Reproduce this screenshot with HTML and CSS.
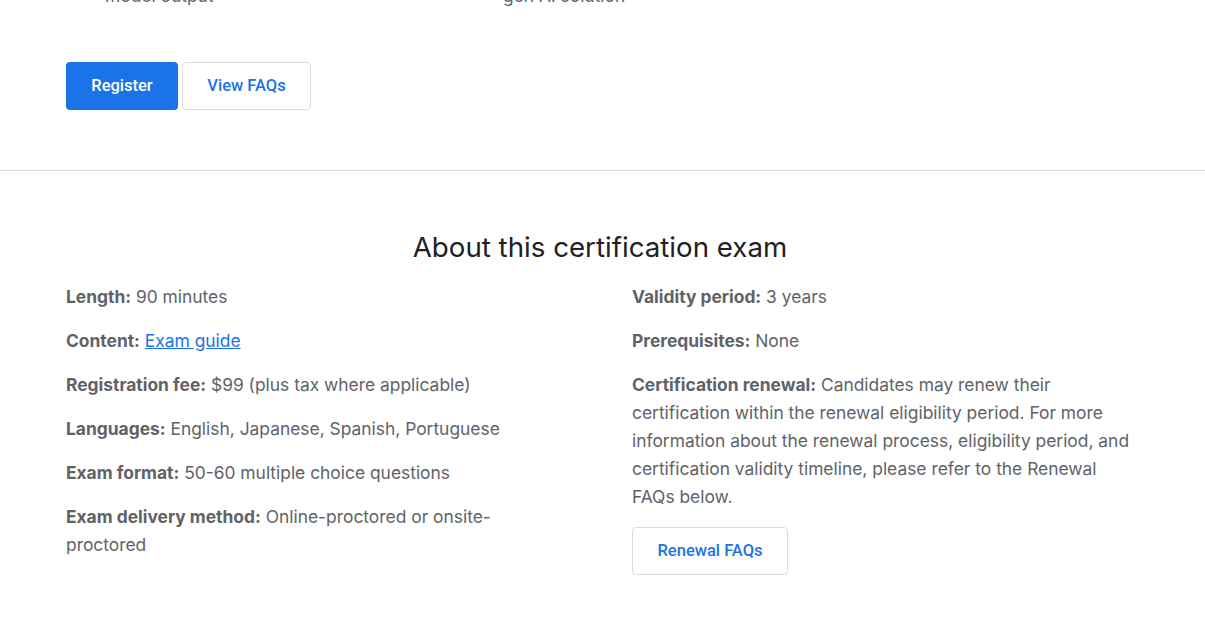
FILE: index.html
```html
<!DOCTYPE html>
<html lang="en">
<head>
<meta charset="utf-8">
<title>About this certification exam</title>
<link rel="stylesheet" href="styles.css">
</head>
<body>
  <section class="intro">
    <div class="wrap">
      <ul class="skills">
        <li>model output</li>
        <li>gen AI solution</li>
      </ul>
      <div class="actions">
        <a class="btn btn-primary" href="#">Register</a>
        <a class="btn btn-outline" href="#">View FAQs</a>
      </div>
    </div>
  </section>

  <section class="about">
    <div class="wrap">
      <h2 class="about-title">About this certification exam</h2>
      <div class="about-grid">
        <div class="col">
          <p><b>Length:</b> 90 minutes</p>
          <p><b>Content:</b> <a class="link" href="#">Exam guide</a></p>
          <p><b>Registration fee:</b> $99 (plus tax where applicable)</p>
          <p><b>Languages:</b> English, Japanese, Spanish, Portuguese</p>
          <p><b>Exam format:</b> 50-60 multiple choice questions</p>
          <p class="narrow"><b>Exam delivery method:</b> Online-proctored or onsite-proctored</p>
        </div>
        <div class="col">
          <p><b>Validity period:</b> 3 years</p>
          <p><b>Prerequisites:</b> None</p>
          <p><b>Certification renewal:</b> Candidates may renew their certification within the renewal eligibility period. For more information about the renewal process, eligibility period, and certification validity timeline, please refer to the Renewal FAQs below.</p>
          <a class="btn btn-outline btn-renew" href="#">Renewal FAQs</a>
        </div>
      </div>
    </div>
  </section>
</body>
</html>
```
FILE: styles.css
```css
* {
  box-sizing: border-box;
}

html, body {
  margin: 0;
  background: #ffffff;
}

body {
  font-family: Inter, Roboto, "Liberation Sans", Arial, sans-serif;
  color: #5f6368;
  font-size: 17.4px;
  line-height: 28px;
}

.wrap {
  width: 1068px;
  margin-left: 66px;
}

/* ---- intro: tail of skills list + call-to-action buttons ---- */
.intro {
  padding-bottom: 60px;
  border-bottom: 1px solid #dadce0;
}

.skills {
  list-style: none;
  margin: -18px 0 0;
  padding: 0;
  display: grid;
  grid-template-columns: 398px 398px;
  height: 23px;
}

.skills li {
  padding-left: 39px;
  line-height: 28px;
}

.actions {
  display: flex;
  gap: 4px;
  margin-top: 57px;
}

.btn {
  display: inline-flex;
  align-items: center;
  justify-content: center;
  height: 48px;
  border-radius: 4px;
  font-family: Roboto, "Liberation Sans", Arial, sans-serif;
  font-size: 16.5px;
  font-weight: 500;
  text-decoration: none;
  line-height: 1;
}

.btn-primary {
  background: #1a73e8;
  color: #ffffff;
  width: 112px;
}

.btn-outline {
  background: #ffffff;
  color: #1a73e8;
  border: 1px solid #dadce0;
}

.actions .btn-outline {
  width: 129px;
}

/* ---- about section ---- */
.about {
  padding-top: 58px;
  padding-bottom: 40px;
}

.about-title {
  margin: 0 0 18px;
  text-align: center;
  font-size: 27.7px;
  line-height: 36px;
  font-weight: 400;
  color: #202124;
}

.about-grid {
  display: grid;
  grid-template-columns: 1fr 1fr;
  column-gap: 64px;
}

.col p {
  margin: 0 0 16px;
}

.col b {
  font-weight: 700;
}

.col p.narrow {
  max-width: 440px;
}

.link {
  color: #1a73e8;
  text-decoration: underline;
}

.btn-renew {
  width: 156px;
}
```
